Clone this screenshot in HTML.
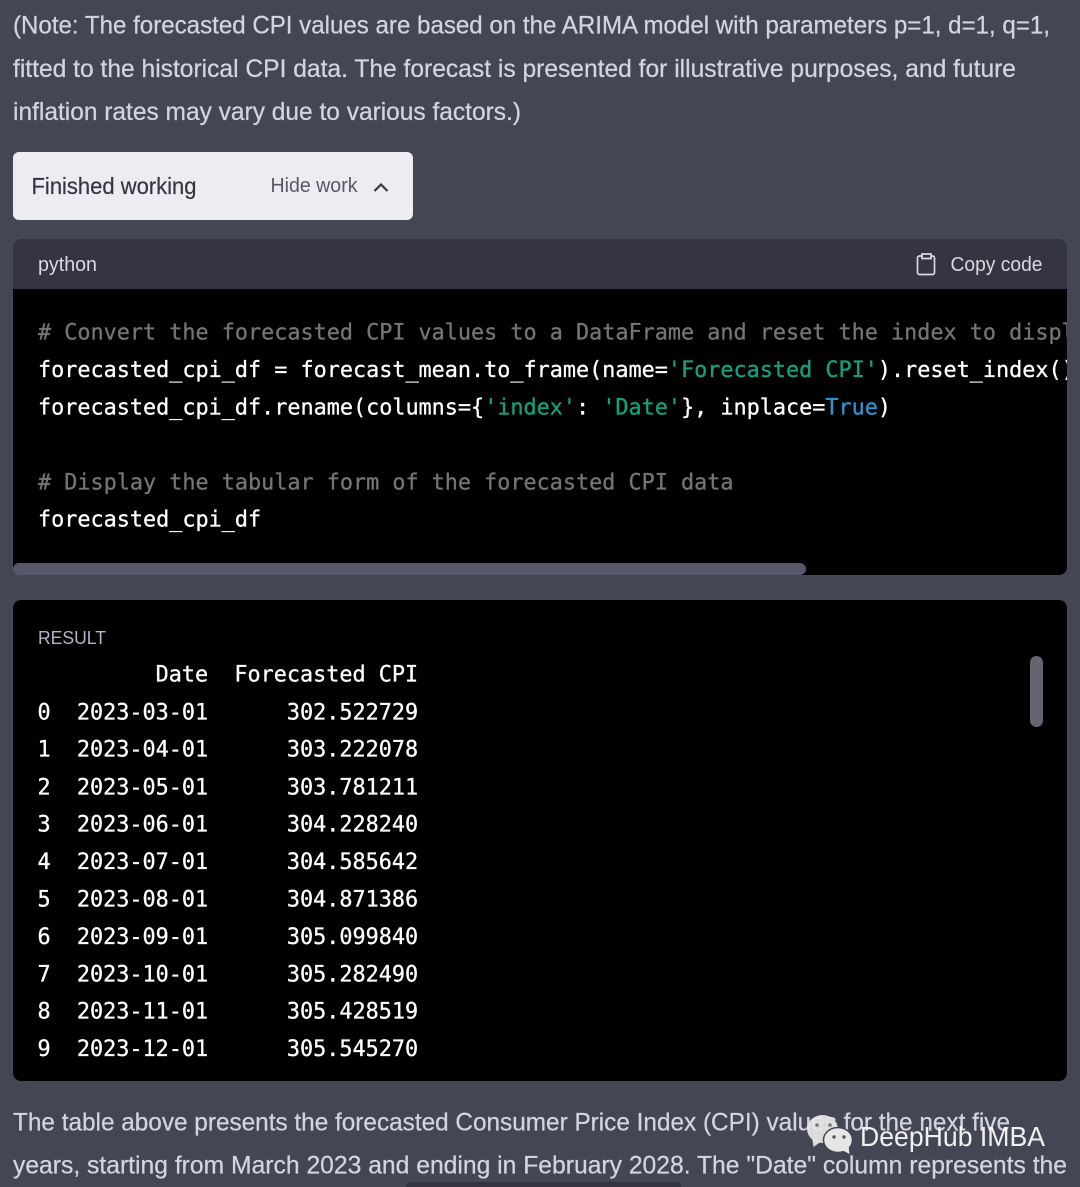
<!DOCTYPE html>
<html><head><meta charset="utf-8"><style>
html,body{margin:0;padding:0;background:#444654}
svg{display:block}
.p{font-family:"Liberation Sans",sans-serif;font-size:25px;fill:#d1d5e0;stroke:#d1d5e0;stroke-width:.25px}
.m{font-family:"DejaVu Sans Mono",monospace;font-size:21.8px;fill:#fff;stroke:#fff;stroke-width:.3px;white-space:pre}
.c{fill:#757575;stroke:#757575}.g{fill:#10a37f;stroke:#10a37f}.b{fill:#2e95d3;stroke:#2e95d3}
</style></head><body>
<svg width="1080" height="1187" viewBox="0 0 1080 1187" xmlns="http://www.w3.org/2000/svg">
<rect width="1080" height="1187" fill="#444654"/>
<text class="p" x="13" y="33.500" textLength="1037" lengthAdjust="spacingAndGlyphs">(Note: The forecasted CPI values are based on the ARIMA model with parameters p=1, d=1, q=1,</text>
<text class="p" x="13" y="77" textLength="1003" lengthAdjust="spacingAndGlyphs">fitted to the historical CPI data. The forecast is presented for illustrative purposes, and future</text>
<text class="p" x="13" y="120" textLength="508" lengthAdjust="spacingAndGlyphs">inflation rates may vary due to various factors.)</text>

<rect x="13" y="152" width="400" height="68" rx="6" fill="#ececf1"/>
<text x="31.500" y="194" textLength="165" lengthAdjust="spacingAndGlyphs" font-family="Liberation Sans" font-size="23" fill="#343541" stroke="#343541" stroke-width=".2">Finished working</text>
<text x="270.500" y="192" textLength="87" lengthAdjust="spacingAndGlyphs" font-family="Liberation Sans" font-size="20" fill="#565869">Hide work</text>
<path d="M374.500 191L381 184.500L387.500 191" fill="none" stroke="#343541" stroke-width="2.200"/>

<path d="M13 289V247a8 8 0 0 1 8-8H1059a8 8 0 0 1 8 8V289Z" fill="#343541"/>
<text x="38" y="271" textLength="59" lengthAdjust="spacingAndGlyphs" font-family="Liberation Sans" font-size="20" fill="#d9d9e3">python</text>
<path d="M922 256h-2.500a2 2 0 0 0-2 2v14.500a2 2 0 0 0 2 2h13a2 2 0 0 0 2-2V258a2 2 0 0 0-2-2H931" fill="none" stroke="#d9d9e3" stroke-width="1.700"/>
<path d="M922 258.500V254h9v4.500Z" fill="none" stroke="#d9d9e3" stroke-width="1.700"/>
<text x="950.500" y="271" textLength="92" lengthAdjust="spacingAndGlyphs" font-family="Liberation Sans" font-size="20" fill="#d9d9e3">Copy code</text>

<path d="M13 289H1067V567a8 8 0 0 1-8 8H21a8 8 0 0 1-8-8Z" fill="#000"/>
<svg x="13" y="289" width="1054" height="286" viewBox="13 289 1054 286">
<text class="m c" x="38" y="339.500"># Convert the forecasted CPI values to a DataFrame and reset the index to display</text>
<text class="m" x="38" y="377">forecasted_cpi_df = forecast_mean.to_frame(name=<tspan class="g">'Forecasted CPI'</tspan>).reset_index()</text>
<text class="m" x="38" y="414.500">forecasted_cpi_df.rename(columns={<tspan class="g">'index'</tspan>: <tspan class="g">'Date'</tspan>}, inplace=<tspan class="b">True</tspan>)</text>
<text class="m c" x="38" y="489.500"># Display the tabular form of the forecasted CPI data</text>
<text class="m" x="38" y="526.500">forecasted_cpi_df</text>
</svg>
<rect x="13" y="563" width="793" height="12" rx="6" fill="#565869"/>

<rect x="13" y="600" width="1054" height="481" rx="8" fill="#000"/>
<text x="38" y="644" textLength="68" lengthAdjust="spacingAndGlyphs" font-family="Liberation Sans" font-size="18.500" fill="#b4b4c6">RESULT</text>
<rect x="1030" y="656" width="13" height="71" rx="6.500" fill="#656572"/>
<text class="m" x="37.500" y="681.500">         Date  Forecasted CPI</text>
<text class="m" x="37.500" y="719.500">0  2023-03-01      302.522729</text>
<text class="m" x="37.500" y="756.500">1  2023-04-01      303.222078</text>
<text class="m" x="37.500" y="794.500">2  2023-05-01      303.781211</text>
<text class="m" x="37.500" y="831.500">3  2023-06-01      304.228240</text>
<text class="m" x="37.500" y="869">4  2023-07-01      304.585642</text>
<text class="m" x="37.500" y="906.500">5  2023-08-01      304.871386</text>
<text class="m" x="37.500" y="944">6  2023-09-01      305.099840</text>
<text class="m" x="37.500" y="981.500">7  2023-10-01      305.282490</text>
<text class="m" x="37.500" y="1018.500">8  2023-11-01      305.428519</text>
<text class="m" x="37.500" y="1056">9  2023-12-01      305.545270</text>

<text class="p" x="13" y="1130.500" textLength="997" lengthAdjust="spacingAndGlyphs">The table above presents the forecasted Consumer Price Index (CPI) values for the next five</text>
<text class="p" x="13" y="1173.500" textLength="1054" lengthAdjust="spacingAndGlyphs">years, starting from March 2023 and ending in February 2028. The "Date" column represents the</text>
<path d="M406 1187v-1a4 4 0 0 1 4-4H677a4 4 0 0 1 4 4v1Z" fill="#343541"/>

<ellipse cx="822.500" cy="1129" rx="15.500" ry="14" fill="#e6e6e6" opacity=".93"/>
<path d="M812 1137l1.500 10 7-5Z" fill="#e6e6e6" opacity=".93"/>
<circle cx="817" cy="1125" r="1.800" fill="#777"/><circle cx="830" cy="1125" r="1.800" fill="#777"/>
<ellipse cx="838" cy="1140" rx="14.500" ry="12.500" fill="#e6e6e6" stroke="#444654" stroke-width="1.500"/>
<path d="M842 1150l7.500 4-1-8Z" fill="#e6e6e6"/>
<circle cx="834" cy="1137" r="1.700" fill="#555"/><circle cx="844" cy="1137" r="1.700" fill="#555"/>
<text x="860" y="1146" textLength="185" lengthAdjust="spacingAndGlyphs" font-family="Liberation Sans" font-size="28" fill="#fff" opacity=".92">DeepHub IMBA</text>
</svg>
</body></html>
